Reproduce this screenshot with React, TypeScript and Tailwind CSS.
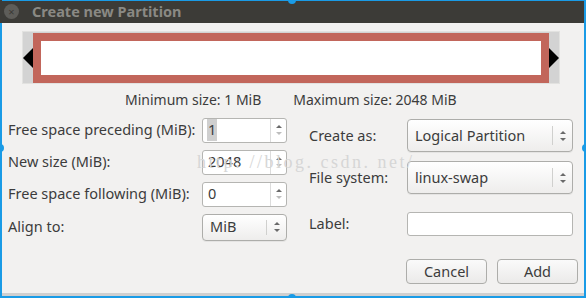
import React from "react";

const font = { fontFamily: '"Noto Sans", "Open Sans", sans-serif' };

function Arrows({ downDim = false }: { downDim?: boolean }) {
  return (
    <svg width="8" height="14" viewBox="0 0 8 14">
      <path d="M1 5 L4 2 L7 5 Z" fill="#6a6a6a" />
      <path d="M1 9 L4 12 L7 9 Z" fill={downDim ? "#bdbdbd" : "#6a6a6a"} />
    </svg>
  );
}

function Spin({ value, selected = false }: { value: string; selected?: boolean }) {
  return (
    <div className="flex h-[25px] w-[85px] shrink-0 overflow-hidden rounded-[3px] border border-[#b5b5b2] bg-white">
      <div className="flex flex-1 items-center pl-[4px] text-[14.5px] text-[#3c3c3c]">
        <span className={selected ? "bg-[#cfcfcf] px-[1px]" : "px-[1px]"}>{value}</span>
      </div>
      <div className="flex w-[16px] items-center justify-center border-l border-[#dcdcdc]">
        <Arrows downDim />
      </div>
    </div>
  );
}

function Combo({ value, w, h }: { value: string; w: string; h: string }) {
  return (
    <div
      className={`flex ${w} ${h} shrink-0 items-center rounded-[4px] border border-[#adadaa] bg-gradient-to-b from-white to-[#eeedec] shadow-[0_1px_0_rgba(0,0,0,0.05)]`}
    >
      <div className="flex-1 pl-[7px] text-[14.5px] text-[#3c3c3c]">{value}</div>
      <div className="h-[60%] border-l border-[#d0d0ce]" />
      <div className="flex w-[19px] items-center justify-center">
        <Arrows />
      </div>
    </div>
  );
}

export default function App() {
  return (
    <div className="relative h-[298px] w-[586px] overflow-hidden bg-[#f2f1f0]" style={font}>
      {/* Title bar */}
      <div className="flex h-[23px] items-center bg-[#3c3b37]">
        <div className="ml-[4px] flex h-[15px] w-[15px] items-center justify-center rounded-full bg-[#5e5d59] text-[11px] leading-none text-[#3a3935]">
          ×
        </div>
        <div className="ml-[13px] text-[14.5px] font-bold text-[#8a8984]">Create new Partition</div>
      </div>

      {/* Partition bar */}
      <div className="ml-[22px] mt-[8px] flex h-[53px] w-[538px] items-center border border-[#e2e2e0] bg-[#d3d3d3]">
        <svg width="10" height="20" viewBox="0 0 10 20" className="shrink-0">
          <path d="M0 10 L10 0 L10 20 Z" fill="#000" />
        </svg>
        <div className="h-[50px] flex-1 bg-[#c2665b] p-[8px]">
          <div className="h-full w-full bg-white" />
        </div>
        <svg width="10" height="20" viewBox="0 0 10 20" className="shrink-0">
          <path d="M10 10 L0 0 L0 20 Z" fill="#000" />
        </svg>
      </div>

      {/* Size info */}
      <div className="mt-[6px] flex h-[18px] items-center text-[14px] text-[#3c3c3c]">
        <span className="ml-[125px]">Minimum size: 1 MiB</span>
        <span className="ml-[32px]">Maximum size: 2048 MiB</span>
      </div>

      {/* Main form */}
      <div className="flex">
        <div className="ml-[8px] mt-[6px] flex w-[279px] flex-col text-[14.5px] text-[#3c3c3c]">
          <div className="flex h-[32px] items-center justify-between">
            <span>Free space preceding (MiB):</span>
            <Spin value="1" selected />
          </div>
          <div className="flex h-[32px] items-center justify-between">
            <span>New size (MiB):</span>
            <Spin value="2048" />
          </div>
          <div className="flex h-[32px] items-center justify-between">
            <span>Free space following (MiB):</span>
            <Spin value="0" />
          </div>
          <div className="flex h-[34px] items-center justify-between">
            <span>Align to:</span>
            <Combo value="MiB" w="w-[85px]" h="h-[27px]" />
          </div>
        </div>

        <div className="ml-[22px] mt-[11px] flex w-[264px] flex-col text-[14.5px] text-[#3c3c3c]">
          <div className="flex items-center justify-between">
            <span>Create as:</span>
            <Combo value="Logical Partition" w="w-[166px]" h="h-[33px]" />
          </div>
          <div className="mt-[9px] flex items-center justify-between">
            <span>File system:</span>
            <Combo value="linux-swap" w="w-[166px]" h="h-[33px]" />
          </div>
          <div className="mt-[18px] flex items-center justify-between">
            <span>Label:</span>
            <div className="h-[24px] w-[166px] rounded-[3px] border border-[#b5b5b2] bg-white" />
          </div>
          <div className="mr-[-5px] mt-[23px] flex justify-end gap-[10px]">
            <div className="flex h-[25px] w-[81px] shrink-0 items-center justify-center rounded-[4px] border border-[#adadaa] bg-gradient-to-b from-[#fafafa] to-[#ebeae9] text-[14.5px]">
              Cancel
            </div>
            <div className="flex h-[25px] w-[81px] shrink-0 items-center justify-center rounded-[4px] border border-[#adadaa] bg-gradient-to-b from-[#fafafa] to-[#ebeae9] text-[14.5px]">
              Add
            </div>
          </div>
        </div>
      </div>

      {/* Bottom strip */}
      <div className="absolute bottom-0 left-0 h-[5px] w-full bg-[#cfcfcf]" />

      {/* Watermark */}
      <div
        className="pointer-events-none absolute left-[197px] top-[149px] text-[18px] tracking-[2.5px] text-[#d6d6d6]"
        style={{ fontFamily: '"Liberation Serif", serif' }}
      >
        http: //blog. csdn. net/
      </div>

      {/* Selection frame */}
      <div className="pointer-events-none absolute inset-0 border-t border-r-2 border-b-2 border-l-2 border-[#1a9be6]" />
      <div className="pointer-events-none absolute left-0 top-0 h-[23px] w-[2px] bg-[#3c3b37]" />
      <div className="absolute left-[288px] top-[-4px] h-[8px] w-[8px] rounded-full bg-[#1a9be6]" />
      <div className="absolute left-[288px] bottom-[-4px] h-[8px] w-[8px] rounded-full bg-[#1a9be6]" />
      <div className="absolute left-[-4px] top-[144px] h-[8px] w-[8px] rounded-full bg-[#1a9be6]" />
      <div className="absolute right-[-4px] top-[144px] h-[8px] w-[8px] rounded-full bg-[#1a9be6]" />
    </div>
  );
}
